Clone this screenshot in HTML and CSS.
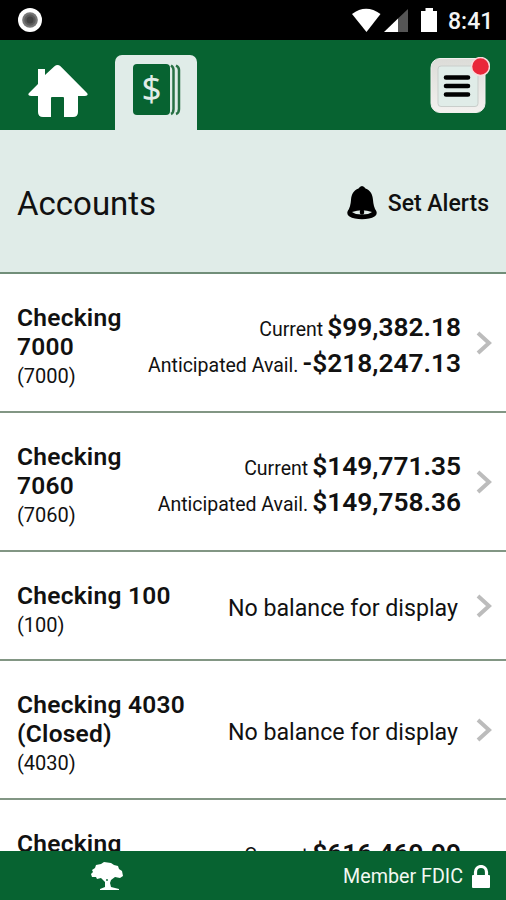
FILE: index.html
```html
<!DOCTYPE html>
<html lang="en">
<head>
<meta charset="utf-8">
<title>Accounts</title>
<link rel="stylesheet" href="styles.css">
</head>
<body>
<div class="screen">
  <div class="status">
    <svg class="record" width="26" height="26" viewBox="0 0 26 26"><circle cx="13" cy="13" r="12" fill="#fff"/><circle cx="13" cy="13" r="7.8" fill="#777"/><circle cx="13" cy="13" r="5.7" fill="#5b5b5b"/><circle cx="13" cy="13" r="3.5" fill="#444"/></svg>
    <svg class="signals" width="88" height="26" viewBox="0 0 88 26"><path d="M0 7Q14-3.500 28.500 7L14.500 25Z" fill="#fff"/><path d="M56 2V25H46V11.500Z" fill="#555"/><path d="M46 11.500V25H32Z" fill="#fff"/><path d="M69 4H73.500V1H81V4H85V25H69Z" fill="#fff"/></svg>
    <span class="clock">8:41</span>
  </div>
  <header class="header">
    <svg class="home" width="60" height="53" viewBox="0 0 60 53"><path d="M26.500 1.200Q29.500-1 32.500 1.200L59 28Q61 30.500 57 31H50V47Q50 52 45 52H36V33Q36 32 35 32H24Q23 32 23 33V52H15Q10 52 10 47V31H3Q-1 30.500 1 28L10 19V4H17V10Z" fill="#fff"/></svg>
    <div class="tab">
      <svg width="48" height="52" viewBox="0 0 48 52"><rect width="37" height="51" rx="4" fill="#076331"/><path d="M38 1.500Q40.500 3 40.500 6V45Q40.500 49 38 50M43 1.500Q46 3 46 6V45Q46 49 43 50" fill="none" stroke="#287044" stroke-width="2.500"/><text class="dollar" x="18.500" y="37" text-anchor="middle">$</text></svg>
    </div>
    <div class="menu">
      <svg width="60" height="58" viewBox="0 0 60 58"><defs><linearGradient id="rim" x2="0" y2="1"><stop stop-color="#dcdcd8"/><stop offset="1" stop-color="#f3f1ef"/></linearGradient></defs><rect x="1" y="1.500" width="54" height="54" rx="9" fill="url(#rim)" stroke="#f0f0ed"/><rect x="8" y="9" width="40" height="40.500" rx="3" fill="#e0ece8" stroke="#c9cecb"/><path d="M16 20.500H38M16 29H38M16 37.500H38" stroke="#000" stroke-width="4.600" stroke-linecap="round"/><circle cx="50.500" cy="9.500" r="9" fill="#e92639" stroke="#f7dadb" stroke-width="1.500"/></svg>
    </div>
  </header>
  <section class="title">
    <h1>Accounts</h1>
    <svg width="30" height="34" viewBox="0 0 30 34"><path d="M15 0Q17 0 18.500 2.500C23.500 4.500 25.500 8 26 14Q26.500 21 29 24.500Q31 28 27.500 30.500C22 34 8 34 2.500 30.500Q-1 28 1 24.500Q3.500 21 4 14C4.500 8 6.500 4.500 11.500 2.500Q13 0 15 0Z"/><path d="M5 26Q15 22.500 25 26Q22 28.500 15 28.500Q8 28.500 5 26Z" fill="#e0ece8"/><ellipse cx="15" cy="26" rx="2.200" ry="2.800"/></svg>
    <span class="alerts">Set Alerts</span>
  </section>
  <main class="list">
    <div class="row">
      <div><div class="name">Checking<br>7000</div><div class="num">(7000)</div></div>
      <div class="amounts"><div><span class="label">Current</span><b>$99,382.18</b></div><div><span class="label">Anticipated Avail.</span><b>-$218,247.13</b></div></div>
      <svg class="chev" width="16" height="24" viewBox="0 0 16 24"><path d="M2 2L13 12L2 22"/></svg>
    </div>
    <div class="row">
      <div><div class="name">Checking<br>7060</div><div class="num">(7060)</div></div>
      <div class="amounts"><div><span class="label">Current</span><b>$149,771.35</b></div><div><span class="label">Anticipated Avail.</span><b>$149,758.36</b></div></div>
      <svg class="chev" width="16" height="24" viewBox="0 0 16 24"><path d="M2 2L13 12L2 22"/></svg>
    </div>
    <div class="row short">
      <div><div class="name">Checking 100</div><div class="num">(100)</div></div>
      <div class="empty">No balance for display</div>
      <svg class="chev" width="16" height="24" viewBox="0 0 16 24"><path d="M2 2L13 12L2 22"/></svg>
    </div>
    <div class="row">
      <div><div class="name">Checking 4030<br>(Closed)</div><div class="num">(4030)</div></div>
      <div class="empty">No balance for display</div>
      <svg class="chev" width="16" height="24" viewBox="0 0 16 24"><path d="M2 2L13 12L2 22"/></svg>
    </div>
    <div class="row">
      <div><div class="name">Checking</div></div>
      <div class="amounts"><div><span class="label">Current</span><b>$616,469.99</b></div></div>
      <svg class="chev" width="16" height="24" viewBox="0 0 16 24"><path d="M2 2L13 12L2 22"/></svg>
    </div>
  </main>
  <footer class="footer">
    <svg class="tree" width="33" height="29" viewBox="0 0 33 29"><path d="M1 8L4 6L5 3L10 2L13 0L20 1L23 3L27 4L28 7L31 9L32 14L29 16L24 15L20 18L19 21L20 25L28 27V28H9V27L14 25V20L10 16L6 17L5 15L1 15L0 12L2 10Z" fill="#fff"/><circle cx="16" cy="18" r=".9" fill="#076331"/></svg>
    <span class="fdic">Member FDIC</span>
    <svg width="18" height="24" viewBox="0 0 18 24"><path d="M3.500 11V7A5.500 5.500 0 0 1 14.500 7V11" fill="none" stroke="#fff" stroke-width="3.200"/><rect y="10" width="18" height="13" rx="1" fill="#fff"/></svg>
  </footer>
</div>
</body>
</html>
```

FILE: styles.css
```css
* { box-sizing: border-box; }
body { margin: 0; font-family: Roboto, "Liberation Sans", sans-serif; color: #111; background: #fff; }
svg { display: block; flex: none; }
.screen { width: 506px; height: 900px; display: flex; flex-direction: column; overflow: hidden; }
.status { height: 39.5px; flex: none; display: flex; align-items: center; background: #000; padding: 0 14px 0 17px; }
.signals { margin-left: auto; margin-right: 8px; }
.clock { color: #f4f4f4; font-size: 23px; font-weight: 500; width: 44px; white-space: nowrap; padding-top: 3px; }
.header { height: 90.5px; flex: none; display: flex; background: #076331; }
.home { margin: 25px 0 0 28px; }
.tab { width: 82px; height: 75px; margin: 15.5px 0 0 27px; padding: 9px 0 0 18px; background: #e0ece8; border-radius: 7px 7px 0 0; }
.dollar { font: 35px "Noto Sans", sans-serif; fill: #e0ece8; }
.menu { margin: 17px 16px 0 auto; }
.title { height: 144px; flex: none; display: flex; align-items: center; padding: 0 17px 0 17px; background: #e0ece8; border-bottom: 2px solid #718e79; }
h1 { margin: 5px auto 0 0; font-size: 33px; font-weight: 400; }
.title svg { margin-top: 4px; }
.alerts { margin-left: 11px; padding-top: 5px; font-size: 23px; font-weight: 500; }
.list { flex: 1; min-height: 0; overflow: hidden; }
.row { height: 139px; display: flex; border-bottom: 2px solid #829684; padding: 29px 14px 0 17px; }
.short { height: 109px; }
.name { font-size: 24.5px; line-height: 29px; font-weight: 600; letter-spacing: .25px; white-space: nowrap; }
.num { font-size: 20px; line-height: 30px; }
.amounts { margin-left: auto; text-align: right; line-height: 36px; margin-top: 6px; white-space: nowrap; }
.amounts div { height: 36px; }
.label { font-size: 19.5px; margin-right: 4px; }
b { font-size: 26.3px; font-weight: 600; }
.empty { margin: 28px 3px 0 auto; font-size: 23.2px; line-height: 28px; }
.short .empty { margin-top: 13px; }
.chev { margin: 28px 0 0 15px; fill: none; stroke: #bcbcbc; stroke-width: 4; }
.short .chev { margin-top: 13px; }
.footer { height: 49px; flex: none; display: flex; align-items: center; padding: 2px 16px 0 91px; background: #076331; color: #f3f8f2; }
.fdic { margin-left: auto; margin-right: 9px; font-size: 19.7px; }
```
